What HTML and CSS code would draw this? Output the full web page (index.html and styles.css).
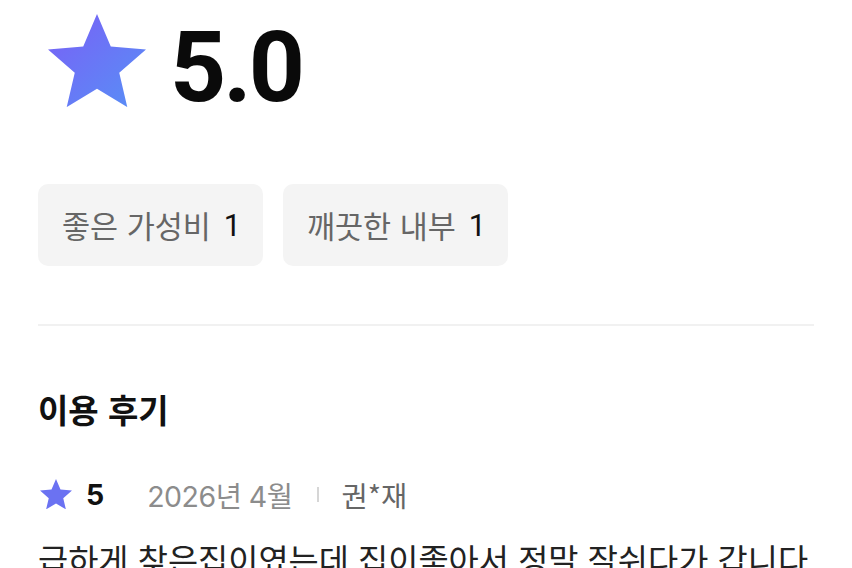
FILE: index.html
```html
<!DOCTYPE html>
<html lang="ko">
<head>
<meta charset="utf-8">
<link rel="stylesheet" href="styles.css">
</head>
<body>
<main class="page">
  <section class="rating">
    <svg class="big-star" viewBox="2 2 20 19.02" aria-hidden="true">
      <defs>
        <linearGradient id="sg" x1="0" y1="0" x2="1" y2="1">
          <stop offset="0" stop-color="#7a5ff6"/>
          <stop offset="1" stop-color="#5790f6"/>
        </linearGradient>
      </defs>
      <path fill="url(#sg)" d="M12 17.27L18.18 21l-1.64-7.03L22 9.24l-7.19-.61L12 2 9.19 8.63 2 9.24l5.46 4.73L5.82 21z"/>
    </svg>
    <span class="score">5.0</span>
  </section>

  <section class="chips">
    <div class="chip"><span class="chip-label">좋은 가성비</span><span class="chip-count">1</span></div>
    <div class="chip"><span class="chip-label">깨끗한 내부</span><span class="chip-count">1</span></div>
  </section>

  <hr class="divider">

  <h2 class="title">이용 후기</h2>

  <div class="meta">
    <svg class="small-star" viewBox="2 2 20 19.02" aria-hidden="true">
      <path fill="#6b72f2" d="M12 17.27L18.18 21l-1.64-7.03L22 9.24l-7.19-.61L12 2 9.19 8.63 2 9.24l5.46 4.73L5.82 21z"/>
    </svg>
    <span class="meta-score">5</span>
    <span class="meta-date">2026년 4월</span>
    <span class="meta-sep"></span>
    <span class="meta-name">권*재</span>
  </div>

  <p class="review">급하게 찾은집이였는데 집이좋아서 정말 잘쉬다가 갑니다</p>
</main>
</body>
</html>
```

FILE: styles.css
```css
* { box-sizing: border-box; }
html, body { margin: 0; padding: 0; background: #fff; }
body {
  font-family: "Inter", "Noto Sans CJK KR", sans-serif;
  color: #111;
  overflow: hidden;
}
.page {
  width: 852px;
  height: 568px;
  padding: 0 38px;
  overflow: hidden;
}
.rating {
  display: flex;
  align-items: flex-start;
  height: 113px;
  padding-top: 14px;
  padding-left: 10px;
}
.big-star {
  display: block;
  width: 98px;
  height: 93.2px;
  flex: none;
}
.score {
  font-family: "Roboto", "Inter", sans-serif;
  font-weight: 700;
  font-size: 98px;
  line-height: 1;
  letter-spacing: -3px;
  margin-top: 5px;
  margin-left: 24px;
  color: #0a0a0a;
}
.chips {
  display: flex;
  gap: 20px;
  margin-top: 71px;
}
.chip {
  display: flex;
  align-items: center;
  gap: 13px;
  height: 82px;
  padding: 0 22px 0 24px;
  background: #f4f4f4;
  border-radius: 10px;
  font-family: "Noto Sans CJK KR", sans-serif;
  font-size: 30.5px;
}
.chip-label { color: #666; }
.chip-count { color: #111; font-family: "Roboto", "Noto Sans CJK KR", sans-serif; }
.divider {
  border: 0;
  height: 2px;
  background: #f1f1f1;
  margin: 58px 0 0;
}
.title {
  margin: 62px 0 0;
  font-family: "Noto Sans CJK KR", sans-serif;
  font-weight: 700;
  font-size: 33px;
  line-height: 42px;
  color: #111;
}
.meta {
  display: flex;
  align-items: center;
  height: 40px;
  margin-top: 44px;
  font-size: 28.5px;
}
.small-star {
  display: block;
  width: 32px;
  height: 30.4px;
  margin-left: 2px;
}
.meta-score {
  font-family: "Inter", sans-serif;
  font-weight: 700;
  margin-left: 14px;
  color: #111;
}
.meta-date {
  font-family: "Inter", "Noto Sans CJK KR", sans-serif;
  color: #8c8c8c;
  margin-left: 43px;
  letter-spacing: -0.5px;
}
.meta-sep {
  width: 2px;
  height: 15px;
  background: #d6d6d6;
  margin-left: 24px;
}
.meta-name {
  font-family: "Noto Sans CJK KR", sans-serif;
  color: #666;
  margin-left: 23px;
}
.review {
  margin: 24px 0 0;
  font-family: "Noto Sans CJK KR", sans-serif;
  font-size: 32.8px;
  line-height: 42px;
  color: #222;
  white-space: nowrap;
}
```
